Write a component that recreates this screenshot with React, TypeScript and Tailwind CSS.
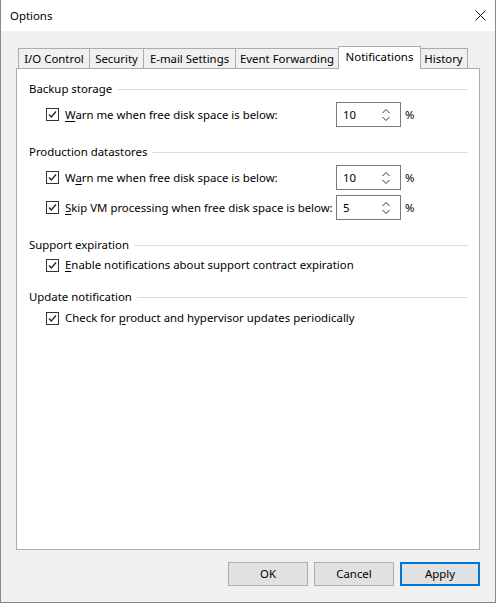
import React from "react";

const font = { fontFamily: '"Noto Sans", "Open Sans", sans-serif' };

function Check() {
  return (
    <span className="inline-flex w-[13px] h-[13px] border border-[#333333] bg-white items-center justify-center shrink-0">
      <svg width="11" height="11" viewBox="0 0 11 11">
        <path d="M2 5.5 L4.3 8 L9 2.5" fill="none" stroke="#222" strokeWidth="1.3" />
      </svg>
    </span>
  );
}

function U({ children }: { children: React.ReactNode }) {
  return <span className="underline underline-offset-2">{children}</span>;
}

function Header({ title }: { title: string }) {
  return (
    <div className="flex items-center h-4">
      <span className="whitespace-nowrap">{title}</span>
      <div className="flex-1 h-px bg-[#dcdcdc] ml-[5px]" />
    </div>
  );
}

function Spin({ value }: { value: string }) {
  return (
    <div className="flex items-center w-[65px] h-[25px] border border-[#7a7a7a] bg-white">
      <span className="pl-[6px] flex-1">{value}</span>
      <svg width="10" height="18" viewBox="0 0 10 18" className="mr-[9px]">
        <path d="M1.5 7 L5 3.5 L8.5 7" fill="none" stroke="#333" strokeWidth="1" />
        <path d="M1.5 11 L5 14.5 L8.5 11" fill="none" stroke="#333" strokeWidth="1" />
      </svg>
    </div>
  );
}

function SpinRow({ label, value }: { label: React.ReactNode; value: string }) {
  return (
    <div className="flex items-center h-[25px]">
      <div className="flex items-center w-[290px]">
        <Check />
        <span className="ml-[6px] whitespace-nowrap">{label}</span>
      </div>
      <Spin value={value} />
      <span className="ml-[4px]">%</span>
    </div>
  );
}

function CheckRow({ label }: { label: React.ReactNode }) {
  return (
    <div className="flex items-center h-4">
      <Check />
      <span className="ml-[6px] whitespace-nowrap">{label}</span>
    </div>
  );
}

function Tab({ label, w, active }: { label: string; w: number; active?: boolean }) {
  if (active) {
    return (
      <div
        className="relative z-10 -ml-px -mr-[1px] h-[23px] -mb-px bg-white border border-b-0 border-[#acacac] flex items-center justify-center"
        style={{ width: w }}
      >
        <span className="-mt-[3px]">{label}</span>
      </div>
    );
  }
  return (
    <div
      className="-ml-px first:ml-0 h-[20px] mt-[2px] bg-[#f0f0f0] border border-b-0 border-[#acacac] flex items-center justify-center"
      style={{ width: w }}
    >
      <span>{label}</span>
    </div>
  );
}

export default function App() {
  return (
    <div
      className="w-[496px] h-[603px] bg-[#f0f0f0] border-l border-r border-b border-[#888888] flex flex-col text-[11.4px] leading-4 text-black"
      style={font}
    >
      <div className="h-[31px] bg-white flex items-center justify-between pl-[9px] pr-[9px] shrink-0">
        <span>Options</span>
        <svg width="11" height="11" viewBox="0 0 11 11">
          <path d="M0.5 0.5 L10.5 10.5 M10.5 0.5 L0.5 10.5" stroke="#111" strokeWidth="1" />
        </svg>
      </div>
      <div className="flex-1 flex flex-col pl-[15px] pr-[15px] pt-[15px] pb-[16px]">
        <div className="flex h-[22px] pl-[2px] items-start">
          <Tab label="I/O Control" w={72} />
          <Tab label="Security" w={55} />
          <Tab label="E-mail Settings" w={93} />
          <Tab label="Event Forwarding" w={104} />
          <Tab label="Notifications" w={83} active />
          <Tab label="History" w={49} />
        </div>
        <div className="h-[482px] bg-white border border-[#adadad] pl-[12px] pr-[11px] pt-[12px] flex flex-col">
          <Header title="Backup storage" />
          <div className="pl-[17px] mt-[5px]">
            <SpinRow label={<><U>W</U>arn me when free disk space is below:</>} value="10" />
          </div>
          <div className="mt-[17px]">
            <Header title="Production datastores" />
          </div>
          <div className="pl-[17px] mt-[5px] flex flex-col gap-[5px]">
            <SpinRow label={<>W<U>a</U>rn me when free disk space is below:</>} value="10" />
            <SpinRow label={<><U>S</U>kip VM processing when free disk space is below:</>} value="5" />
          </div>
          <div className="mt-[17px]">
            <Header title="Support expiration" />
          </div>
          <div className="pl-[17px] mt-[4px]">
            <CheckRow label={<><U>E</U>nable notifications about support contract expiration</>} />
          </div>
          <div className="mt-[16px]">
            <Header title="Update notification" />
          </div>
          <div className="pl-[17px] mt-[5px]">
            <CheckRow label={<>Check for <U>p</U>roduct and hypervisor updates periodically</>} />
          </div>
        </div>
        <div className="flex justify-end gap-[6px] mt-[12px]">
          <button className="w-[80px] h-[24px] bg-[#e1e1e1] border border-[#adadad]">OK</button>
          <button className="w-[80px] h-[24px] bg-[#e1e1e1] border border-[#adadad]">Cancel</button>
          <button className="w-[80px] h-[24px] bg-[#e1e1e1] border-2 border-[#0078d7]">Apply</button>
        </div>
      </div>
    </div>
  );
}
